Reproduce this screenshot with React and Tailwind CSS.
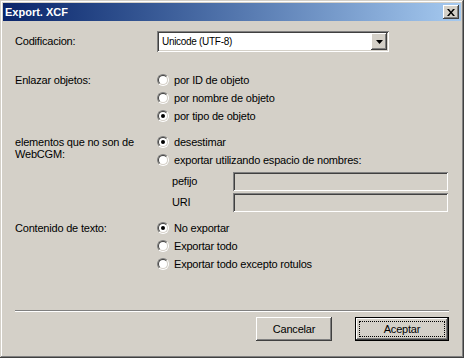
const raised =
  'shadow-[inset_-1px_-1px_#404040,inset_1px_1px_#ffffff,inset_-2px_-2px_#808080,inset_2px_2px_#d4d0c8]';
const sunken =
  'shadow-[inset_1px_1px_#808080,inset_-1px_-1px_#ffffff,inset_2px_2px_#404040,inset_-2px_-2px_#d4d0c8]';

const Radio = ({ label, checked = false }) => (
  <div className="flex items-center h-[18px]">
    <div className="w-[12px] h-[12px] rounded-full border border-t-[#808080] border-l-[#808080] border-b-white border-r-white flex-shrink-0">
      <div className="w-full h-full rounded-full border border-t-[#404040] border-l-[#404040] border-b-[#d4d0c8] border-r-[#d4d0c8] bg-white flex items-center justify-center">
        {checked && <div className="w-[4px] h-[4px] rounded-full bg-black" />}
      </div>
    </div>
    <span className="ml-[5px] leading-none">{label}</span>
  </div>
);

const Row = ({ label, children, className = '' }) => (
  <div className={`flex ${className}`}>
    <div className="w-[142px] flex-shrink-0 leading-[12px] pt-[3px]">{label}</div>
    <div className="flex-1 flex flex-col">{children}</div>
  </div>
);

const Field = ({ label }) => (
  <div className="flex items-center h-[19px]">
    <span className="w-[76px] pl-[15px] flex-shrink-0">{label}</span>
    <div className={`w-[215px] h-full bg-[#d4d0c8] ${sunken}`} />
  </div>
);

const Button = ({ children, isDefault = false, className = '' }) => (
  <button
    className={`h-[24px] flex items-center justify-center text-black ${className} ${
      isDefault ? 'border border-black p-0' : ''
    }`}
  >
    <div className={`w-full h-full flex items-center justify-center bg-[#d4d0c8] ${raised} ${isDefault ? 'p-[3px]' : ''}`}>
      {isDefault ? (
        <div className="w-full h-full border border-dotted border-black flex items-center justify-center">
          {children}
        </div>
      ) : (
        children
      )}
    </div>
  </button>
);

export default function App() {
  return (
    <div
      className={`w-[464px] h-[358px] bg-[#d4d0c8] p-[3px] flex flex-col text-[11px] tracking-[-0.2px] text-black shadow-[inset_-1px_-1px_#404040,inset_1px_1px_#d4d0c8,inset_-2px_-2px_#808080,inset_2px_2px_#ffffff]`}
      style={{ fontFamily: '"Liberation Sans", Arial, sans-serif' }}
    >
      {/* Title bar */}
      <div className="h-[18px] flex items-center justify-between bg-gradient-to-r from-[#0a246a] to-[#a6caf0] pl-[2px] pr-[2px]">
        <span className="text-white font-bold text-[11px] tracking-normal leading-none">Export. XCF</span>
        <div className={`w-[16px] h-[14px] bg-[#d4d0c8] flex items-center justify-center ${raised}`}>
          <svg width="8" height="7" viewBox="0 0 8 7">
            <path d="M0 0h2l2 2.5L6 0h2L5 3.5 8 7H6L4 4.5 2 7H0l3-3.5z" fill="#000" />
          </svg>
        </div>
      </div>

      {/* Content */}
      <div className="flex-1 flex flex-col pl-[12px] pr-[12px] pt-[10px]">
        <div className="flex items-center h-[21px]">
          <div className="w-[142px] flex-shrink-0">Codificacion:</div>
          <div className={`w-[232px] h-full bg-white flex items-center justify-between p-[2px] ${sunken}`}>
            <span className="pl-[3px] text-[10px] tracking-[-0.3px]">Unicode (UTF-8)</span>
            <div className={`w-[16px] h-[17px] bg-[#d4d0c8] flex items-center justify-center ${raised}`}>
              <svg width="7" height="4" viewBox="0 0 7 4">
                <path d="M0 0h7L3.5 4z" fill="#000" />
              </svg>
            </div>
          </div>
        </div>

        <Row label="Enlazar objetos:" className="mt-[19px]">
          <Radio label="por ID de objeto" />
          <Radio label="por nombre de objeto" />
          <Radio label="por tipo de objeto" checked />
        </Row>

        <Row
          label={
            <>
              elementos que no son de
              <br />
              WebCGM:
            </>
          }
          className="mt-[8px]"
        >
          <Radio label="desestimar" checked />
          <Radio label="exportar utilizando espacio de nombres:" />
          <div className="flex flex-col gap-[2px] mt-[3px]">
            <Field label="pefijo" />
            <Field label="URI" />
          </div>
        </Row>

        <Row label="Contenido de texto:" className="mt-[7px]">
          <Radio label="No exportar" checked />
          <Radio label="Exportar todo" />
          <Radio label="Exportar todo excepto rotulos" />
        </Row>

        <div className="mt-[37px] border-t border-t-[#808080] border-b border-b-white" />

        <div className="flex justify-end gap-[23px] mt-[5px]">
          <Button className="w-[76px]">Cancelar</Button>
          <Button className="w-[94px]" isDefault>
            Aceptar
          </Button>
        </div>
      </div>
    </div>
  );
}
